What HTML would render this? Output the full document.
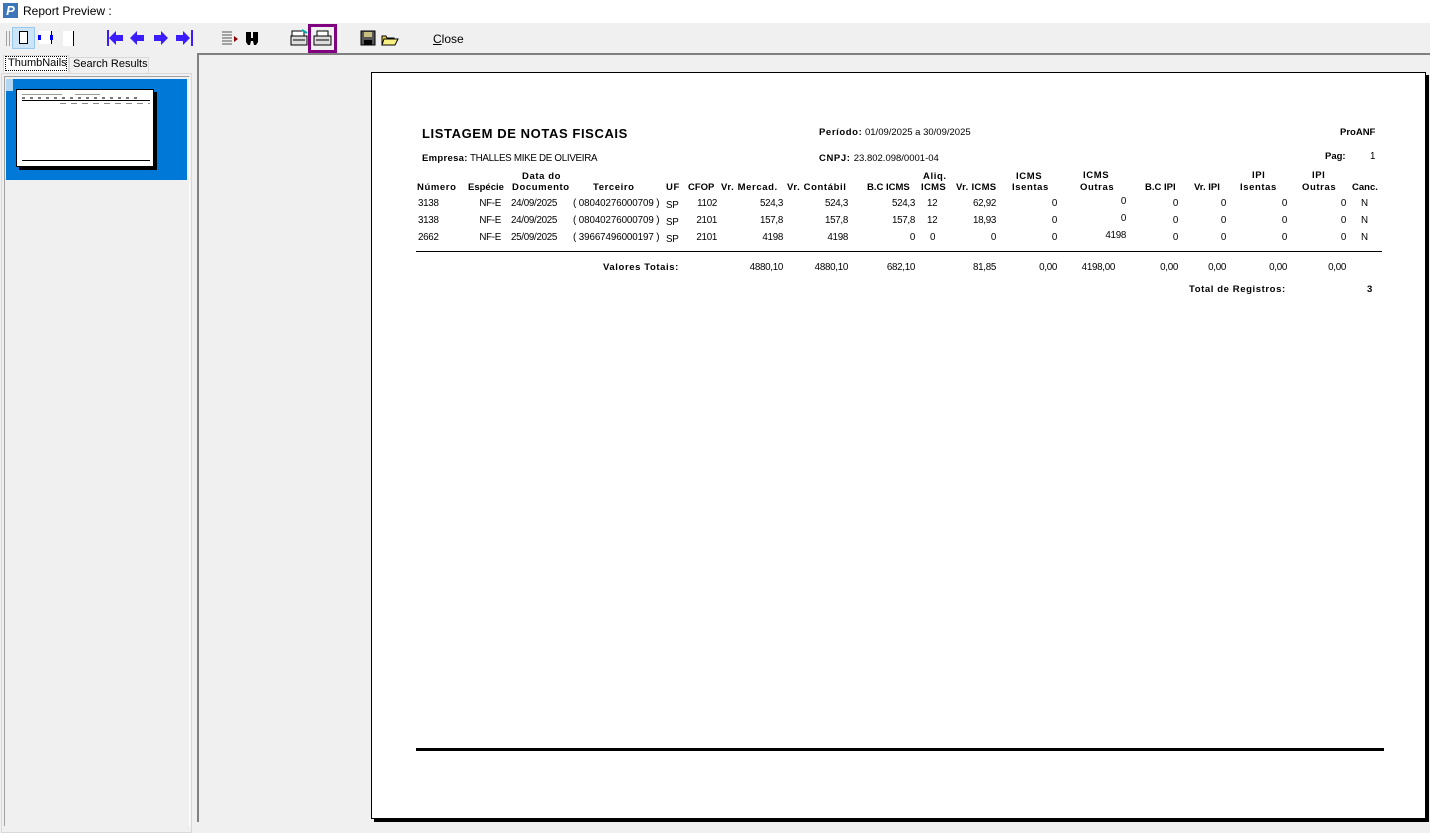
<!DOCTYPE html>
<html><head><meta charset="utf-8"><style>
*{margin:0;padding:0;box-sizing:border-box}
body{width:1430px;height:822px;overflow:hidden;background:#f0f0f0;font-family:"Liberation Sans",Arial,sans-serif;position:relative}
.a{position:absolute;white-space:nowrap}
.r{position:absolute;white-space:nowrap;text-align:right;width:120px}
.h{font-weight:bold;font-size:9.5px;letter-spacing:.6px;color:#000}
.d{font-size:9.8px;letter-spacing:-.3px;color:#000}
</style></head><body>
<div class="a" style="left:0;top:0;width:1430px;height:23px;background:#fff"></div>
<div class="a" style="left:3px;top:3px;width:15px;height:15px;background:#3b76b8;color:#fff;font-weight:bold;font-style:italic;font-size:13px;line-height:15px;text-align:center">P</div>
<div class="a" style="left:23px;top:4px;font-size:12px;color:#000">Report Preview :</div>
<div class="a" style="left:6px;top:31px;width:1px;height:15px;background:#a0a0a0"></div>
<div class="a" style="left:9px;top:31px;width:1px;height:15px;background:#a0a0a0"></div>
<div class="a" style="left:12px;top:27px;width:23px;height:22px;background:#cce4f7;border:1px solid #99c9ef"></div>
<div class="a" style="left:19px;top:31px;width:9px;height:13px;background:#fff;border:1px solid #000"></div>
<div class="a" style="left:39px;top:31px;width:13px;height:13px;background:#fff;border-right:1px solid #000"></div>
<div class="a" style="left:38px;top:35px;width:3px;height:5px;background:#00f"></div>
<div class="a" style="left:50px;top:35px;width:3px;height:5px;background:#00f"></div>
<div class="a" style="left:63px;top:31px;width:11px;height:15px;background:#fff;border-right:1px solid #000"></div>
<svg class="a" style="left:106px;top:29px" width="90" height="18" viewBox="0 0 90 18" fill="#3a1cff">
<rect x="1" y="1" width="2" height="16"/><polygon points="3,9 10,2 10,6 17,6 17,12 10,12 10,16"/>
<polygon points="24,9 31,2 31,6 38,6 38,12 31,12 31,16"/>
<polygon points="62,9 55,2 55,6 48,6 48,12 55,12 55,16"/>
<polygon points="84,9 77,2 77,6 70,6 70,12 77,12 77,16"/><rect x="85" y="1" width="2" height="16"/>
</svg>
<svg class="a" style="left:222px;top:30px" width="40" height="17" viewBox="0 0 40 17">
<g stroke="#555"><line x1="0" y1="2" x2="10" y2="2"/><line x1="0" y1="5" x2="10" y2="5"/><line x1="0" y1="8" x2="10" y2="8"/><line x1="0" y1="11" x2="10" y2="11"/><line x1="0" y1="14" x2="10" y2="14"/></g>
<polygon points="12,6 16,9 12,12" fill="#8b0000"/>
<path d="M24 2h5v6h2V2h5v10l-2 3h-2l-1-4h-2l-1 4h-2l-2-3z" fill="#000"/>
</svg>
<svg class="a" style="left:290px;top:29px" width="20" height="18" viewBox="0 0 20 18">
<rect x="2" y="2" width="12" height="5" fill="#fff" stroke="#000"/><rect x="1" y="7" width="16" height="9" fill="#ddd" stroke="#000"/><line x1="3" y1="11" x2="15" y2="11" stroke="#000"/><path d="M12 1l5 3" stroke="#0aa" stroke-width="2"/></svg>
<div class="a" style="left:308px;top:24px;width:29px;height:29px;border:3px solid #800080"></div>
<svg class="a" style="left:313px;top:29px" width="20" height="18" viewBox="0 0 20 18">
<rect x="4" y="2" width="11" height="5" fill="#fff" stroke="#000"/><rect x="1" y="7" width="17" height="9" fill="#ddd" stroke="#000"/><line x1="3" y1="11" x2="16" y2="11" stroke="#000"/></svg>
<svg class="a" style="left:360px;top:30px" width="40" height="17" viewBox="0 0 40 17">
<rect x="1" y="1" width="14" height="14" fill="#555" stroke="#000"/><rect x="4" y="2" width="8" height="5" fill="#c8c080"/><rect x="4" y="10" width="8" height="5" fill="#000"/>
<path d="M22 6h4l1 2h7v7H22z" fill="#e8d040" stroke="#000"/><path d="M24 9h14l-3 6H22z" fill="#f8f080" stroke="#000"/></svg>
<div class="a" style="left:433px;top:32px;font-size:12px;color:#000"><u>C</u>lose</div>
<div class="a" style="left:3px;top:55px;width:66px;height:17px;background:#fff;border:1px solid #d9d9d9;border-bottom:none"></div>
<div class="a" style="left:5px;top:56px;width:62px;height:15px;border:1px dotted #000"></div>
<div class="a" style="left:8px;top:57px;font-size:11px;color:#000">ThumbNails</div>
<div class="a" style="left:69px;top:57px;width:80px;height:16px;border:1px solid #d9d9d9;border-bottom:none"></div>
<div class="a" style="left:73px;top:58px;font-size:11px;color:#000">Search Results</div>
<div class="a" style="left:1px;top:73px;width:191px;height:760px;border:1px solid #d9d9d9"></div>
<div class="a" style="left:4px;top:76px;width:186px;height:750px;border:1px solid #a0a0a0;border-right-color:#fff;border-bottom:none;background:#f0f0f0"></div>
<div class="a" style="left:6px;top:79px;width:181px;height:101px;background:#0078d7"></div>
<div class="a" style="left:6px;top:79px;width:7px;height:12px;background:#fff;opacity:.7"></div>
<div class="a" style="left:19px;top:92px;width:138px;height:78px;background:#000"></div>
<div class="a" style="left:16px;top:89px;width:138px;height:78px;background:#fff;border:1px solid #000"></div>
<div class="a" style="left:22px;top:100px;width:128px;height:1px;background:#000"></div>
<div class="a" style="left:22px;top:160px;width:128px;height:1px;background:#000"></div>
<div class="a" style="left:22px;top:94px;width:40px;height:1px;background:#999"></div>
<div class="a" style="left:75px;top:94px;width:25px;height:1px;background:#999"></div>
<div class="a" style="left:22px;top:97px;width:120px;height:2px;background:repeating-linear-gradient(90deg,#777 0 3px,transparent 3px 8px)"></div>
<div class="a" style="left:60px;top:103px;width:90px;height:1px;background:repeating-linear-gradient(90deg,#888 0 6px,transparent 6px 11px)"></div>
<div class="a" style="left:197px;top:53px;width:1233px;height:769px;border-left:2px solid #808080;border-top:2px solid #808080;background:#f0f0f0"></div>
<div class="a" style="left:374px;top:75px;width:1055px;height:747px;background:#000"></div>
<div class="a" style="left:371px;top:72px;width:1055px;height:747px;background:#fff;border:1px solid #000"></div>
<div class="a" style="left:422px;top:126px;font-weight:bold;font-size:13px;letter-spacing:.6px">LISTAGEM DE NOTAS FISCAIS</div>
<div class="a h" style="left:819px;top:127px">Período:<span style="font-weight:normal;letter-spacing:0"> 01/09/2025 a 30/09/2025</span></div>
<div class="a h" style="left:1340px;top:127px;letter-spacing:0">ProANF</div>
<div class="a h" style="left:422px;top:153px;letter-spacing:.3px">Empresa:<span class="d" style="font-weight:normal"> THALLES MIKE DE OLIVEIRA</span></div>
<div class="a h" style="left:819px;top:153px">CNPJ: <span style="font-weight:normal;letter-spacing:0">23.802.098/0001-04</span></div>
<div class="a h" style="left:1325px;top:151px;letter-spacing:0">Pag:</div>
<div class="a d" style="left:1370px;top:151px">1</div>
<div class="a h" style="left:522px;top:171px">Data do</div>
<div class="a h" style="left:923px;top:171px">Aliq.</div>
<div class="a h" style="left:1016px;top:171px">ICMS</div>
<div class="a h" style="left:1083px;top:170px">ICMS</div>
<div class="a h" style="left:1252px;top:170px">IPI</div>
<div class="a h" style="left:1312px;top:170px">IPI</div>
<div class="a h" style="left:417px;top:182px">Número</div>
<div class="a h" style="left:468px;top:182px;letter-spacing:0">Espécie</div>
<div class="a h" style="left:512px;top:182px">Documento</div>
<div class="a h" style="left:593px;top:182px">Terceiro</div>
<div class="a h" style="left:666px;top:182px">UF</div>
<div class="a h" style="left:688px;top:182px;letter-spacing:0">CFOP</div>
<div class="a h" style="left:721px;top:182px">Vr. Mercad.</div>
<div class="a h" style="left:787px;top:182px">Vr. Contábil</div>
<div class="a h" style="left:867px;top:182px;letter-spacing:0">B.C ICMS</div>
<div class="a h" style="left:921px;top:182px;letter-spacing:.3px">ICMS</div>
<div class="a h" style="left:956px;top:182px;letter-spacing:.3px">Vr. ICMS</div>
<div class="a h" style="left:1012px;top:182px">Isentas</div>
<div class="a h" style="left:1080px;top:182px">Outras</div>
<div class="a h" style="left:1145px;top:182px;letter-spacing:0">B.C IPI</div>
<div class="a h" style="left:1194px;top:182px;letter-spacing:0">Vr. IPI</div>
<div class="a h" style="left:1240px;top:182px">Isentas</div>
<div class="a h" style="left:1302px;top:182px">Outras</div>
<div class="a h" style="left:1352px;top:182px;letter-spacing:0">Canc.</div>
<div class="d">
<div class="a" style="left:418px;top:198px">3138</div><div class="a" style="left:418px;top:215px">3138</div><div class="a" style="left:418px;top:232px">2662</div>
<div class="r" style="left:381px;top:198px">NF-E</div><div class="r" style="left:381px;top:215px">NF-E</div><div class="r" style="left:381px;top:232px">NF-E</div>
<div class="a" style="left:511px;top:198px">24/09/2025</div><div class="a" style="left:511px;top:215px">24/09/2025</div><div class="a" style="left:511px;top:232px">25/09/2025</div>
<div class="a" style="left:573px;top:198px;letter-spacing:-.1px">( 08040276000709 )</div><div class="a" style="left:573px;top:215px;letter-spacing:-.1px">( 08040276000709 )</div><div class="a" style="left:573px;top:232px;letter-spacing:-.1px">( 39667496000197 )</div>
<div class="a" style="left:666px;top:200px">SP</div><div class="a" style="left:666px;top:217px">SP</div><div class="a" style="left:666px;top:234px">SP</div>
<div class="r" style="left:597px;top:198px">1102</div><div class="r" style="left:597px;top:215px">2101</div><div class="r" style="left:597px;top:232px">2101</div>
<div class="r" style="left:663px;top:198px">524,3</div><div class="r" style="left:663px;top:215px">157,8</div><div class="r" style="left:663px;top:232px">4198</div>
<div class="r" style="left:728px;top:198px">524,3</div><div class="r" style="left:728px;top:215px">157,8</div><div class="r" style="left:728px;top:232px">4198</div>
<div class="r" style="left:795px;top:198px">524,3</div><div class="r" style="left:795px;top:215px">157,8</div><div class="r" style="left:795px;top:232px">0</div>
<div class="a" style="left:927px;top:198px">12</div><div class="a" style="left:927px;top:215px">12</div><div class="a" style="left:930px;top:232px">0</div>
<div class="r" style="left:876px;top:198px">62,92</div><div class="r" style="left:876px;top:215px">18,93</div><div class="r" style="left:876px;top:232px">0</div>
<div class="r" style="left:937px;top:198px">0</div><div class="r" style="left:937px;top:215px">0</div><div class="r" style="left:937px;top:232px">0</div>
<div class="r" style="left:1006px;top:196px">0</div><div class="r" style="left:1006px;top:213px">0</div><div class="r" style="left:1006px;top:230px">4198</div>
<div class="r" style="left:1058px;top:198px">0</div><div class="r" style="left:1058px;top:215px">0</div><div class="r" style="left:1058px;top:232px">0</div>
<div class="r" style="left:1106px;top:198px">0</div><div class="r" style="left:1106px;top:215px">0</div><div class="r" style="left:1106px;top:232px">0</div>
<div class="r" style="left:1167px;top:198px">0</div><div class="r" style="left:1167px;top:215px">0</div><div class="r" style="left:1167px;top:232px">0</div>
<div class="r" style="left:1226px;top:198px">0</div><div class="r" style="left:1226px;top:215px">0</div><div class="r" style="left:1226px;top:232px">0</div>
<div class="a" style="left:1361px;top:198px">N</div><div class="a" style="left:1361px;top:215px">N</div><div class="a" style="left:1361px;top:232px">N</div>
</div>
<div class="a" style="left:416px;top:251px;width:966px;height:1px;background:#000"></div>
<div class="a h" style="left:603px;top:262px">Valores Totais:</div>
<div class="d">
<div class="r" style="left:663px;top:262px">4880,10</div>
<div class="r" style="left:728px;top:262px">4880,10</div>
<div class="r" style="left:795px;top:262px">682,10</div>
<div class="r" style="left:876px;top:262px">81,85</div>
<div class="r" style="left:937px;top:262px">0,00</div>
<div class="r" style="left:995px;top:262px">4198,00</div>
<div class="r" style="left:1058px;top:262px">0,00</div>
<div class="r" style="left:1106px;top:262px">0,00</div>
<div class="r" style="left:1167px;top:262px">0,00</div>
<div class="r" style="left:1226px;top:262px">0,00</div>
</div>
<div class="a h" style="left:1189px;top:284px">Total de Registros:</div>
<div class="a h" style="left:1367px;top:284px">3</div>
<div class="a" style="left:416px;top:748px;width:968px;height:3px;background:#000"></div>
</body></html>
